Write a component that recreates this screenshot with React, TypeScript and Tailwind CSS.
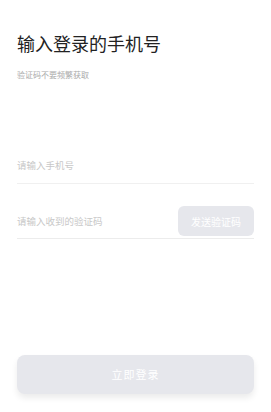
export default function App() {
  return (
    <div
      className="h-[412px] w-[271px] bg-white flex flex-col px-[17px]"
      style={{ fontFamily: '"Noto Sans CJK SC", "Noto Sans", sans-serif' }}
    >
      <h1 className="mt-[31px] text-[18px] leading-[24px] text-[#222]">输入登录的手机号</h1>
      <p className="mt-[14px] text-[8px] leading-[12px] text-[#aaa]">验证码不要频繁获取</p>

      <div className="mt-[66px] border-b border-[#f0f0f0] h-[37px] flex items-center">
        <span className="text-[9.5px] text-[#c8c8c8]">请输入手机号</span>
      </div>

      <div className="mt-[22px] border-b border-[#ececec] pb-[2px] flex items-center justify-between">
        <span className="text-[9.5px] text-[#c8c8c8]">请输入收到的验证码</span>
        <button className="w-[76px] h-[30px] rounded-[6px] bg-[#e6e7ec] text-[10px] text-white">
          发送验证码
        </button>
      </div>

      <div className="flex-1" />

      <button className="mb-[18px] h-[39px] w-full rounded-[8px] bg-[#e6e7ec] text-[11px] tracking-[1px] text-white shadow-[0_4px_6px_rgba(0,0,0,0.08)]">
        立即登录
      </button>
    </div>
  );
}
